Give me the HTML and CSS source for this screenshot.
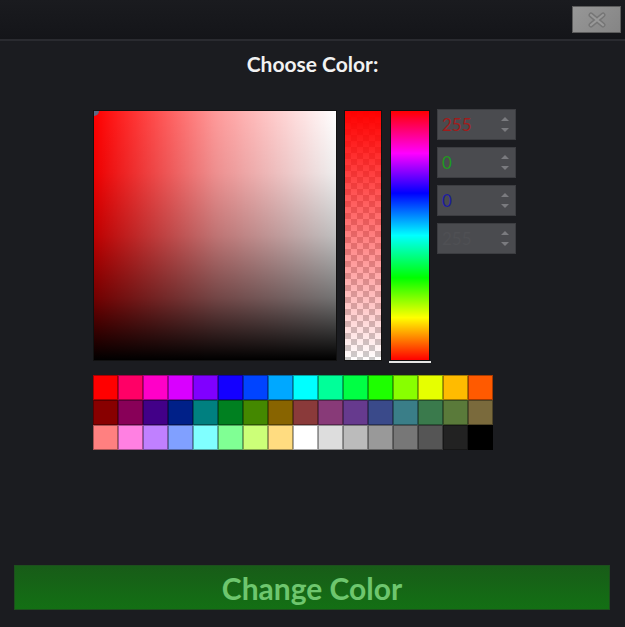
FILE: index.html
```html
<!DOCTYPE html>
<html lang="en">
<head>
    <meta charset="UTF-8">
    <meta name="viewport" content="width=device-width, initial-scale=1.0">
    <title>Choose Color</title>
    <link rel="stylesheet" href="styles.css">
</head>
<body>
    <!-- Window title bar -->
    <div class="titlebar">
        <button class="close-btn" aria-label="Close">
            <svg width="20" height="16" viewBox="0 0 20 16">
                <path d="M4 3 L16 13 M16 3 L4 13" stroke="#767676" stroke-width="5" stroke-linecap="round"/>
                <path d="M4 3 L16 13 M16 3 L4 13" stroke="#999" stroke-width="2.2" stroke-linecap="round"/>
            </svg>
        </button>
    </div>

    <h2 class="heading">Choose Color:</h2>

    <div class="content">
        <div class="picker">
            <div class="sv-box">
                <div class="sv-marker"></div>
            </div>
            <div class="alpha-bar"></div>
            <div class="hue-bar">
                <div class="hue-marker"></div>
            </div>
            <div class="channels">
                <div class="channel">
                    <span class="value red">255</span>
                    <span class="spin"><i class="up"></i><i class="down"></i></span>
                </div>
                <div class="channel">
                    <span class="value green">0</span>
                    <span class="spin"><i class="up"></i><i class="down"></i></span>
                </div>
                <div class="channel">
                    <span class="value blue">0</span>
                    <span class="spin"><i class="up"></i><i class="down"></i></span>
                </div>
                <div class="channel">
                    <span class="value alpha">255</span>
                    <span class="spin"><i class="up"></i><i class="down"></i></span>
                </div>
            </div>
        </div>

        <div class="swatches" id="swatches"></div>
    </div>

    <button class="change-btn">Change Color</button>

    <script>
        // Preset palette, three rows of sixteen
        const palette = [
            '#ff0000', '#ff0066', '#ff00c8', '#d900ff', '#8000ff', '#1400ff', '#0044ff', '#00a8ff',
            '#00ffff', '#00ff99', '#00ff44', '#1eff00', '#88ff00', '#e6ff00', '#ffbb00', '#ff5a00',
            '#880000', '#880058', '#420088', '#002088', '#008080', '#008020', '#448800', '#886400',
            '#8a3a3a', '#883a78', '#663a8e', '#3a4a8a', '#3a7e88', '#3a7a4c', '#5a7a3a', '#7a6a3c',
            '#ff8080', '#ff80e2', '#c080ff', '#80a0ff', '#80ffff', '#80ff94', '#ccff78', '#ffdc80',
            '#ffffff', '#dddddd', '#bbbbbb', '#999999', '#777777', '#555555', '#222222', '#000000'
        ];

        const grid = document.getElementById('swatches');
        palette.forEach(color => {
            const cell = document.createElement('div');
            cell.className = 'swatch';
            cell.style.background = color;
            grid.appendChild(cell);
        });
    </script>
</body>
</html>
```

FILE: styles.css
```css
body {
    margin: 0;
    width: 625px;
    height: 627px;
    background: #1b1c20;
    font-family: Lato, "Open Sans", sans-serif;
    color: #f0f0f0;
    overflow: hidden;
}

/* Title bar */
.titlebar {
    height: 39px;
    background: linear-gradient(#1a1b1f, #141519);
    border-bottom: 2px solid #2a2b30;
    display: flex;
    justify-content: flex-end;
    align-items: flex-start;
}

.close-btn {
    width: 49px;
    height: 27px;
    margin: 6px 4px 0 0;
    padding: 0;
    border: 1px solid #5c5c5c;
    background: linear-gradient(135deg, #979797, #858585);
    display: flex;
    justify-content: center;
    align-items: center;
    cursor: pointer;
}

.heading {
    margin: 11px 0 0;
    text-align: center;
    font-size: 21px;
    line-height: 24px;
    font-weight: bold;
    color: #f2f2f2;
}

.content {
    padding-left: 93px;
    margin-top: 34px;
}

/* Picker row */
.picker {
    display: flex;
    align-items: flex-start;
}

.sv-box {
    position: relative;
    width: 242px;
    height: 249px;
    border: 1px solid #111;
    background:
        linear-gradient(to bottom, rgba(0, 0, 0, 0), rgba(0, 0, 0, 0.07) 25%, rgba(0, 0, 0, 0.25) 50%, rgba(0, 0, 0, 0.55) 75%, #000),
        linear-gradient(to right, rgba(255, 255, 255, 0), rgba(255, 255, 255, 0.6) 50%, #fff),
        #ff0000;
    overflow: hidden;
}

.sv-marker {
    position: absolute;
    left: -5px;
    top: -5px;
    width: 10px;
    height: 10px;
    border-radius: 50%;
    background: #5a6a84;
}

.alpha-bar {
    width: 36px;
    height: 249px;
    margin-left: 7px;
    border: 1px solid #111;
    background:
        linear-gradient(to bottom, #ff0000, rgba(255, 0, 0, 0)),
        conic-gradient(#cccccc 25%, #ffffff 0 50%, #cccccc 0 75%, #ffffff 0) 0 0 / 12px 12px;
}

.hue-bar {
    position: relative;
    width: 38px;
    height: 249px;
    margin-left: 8px;
    border: 1px solid #111;
    background: linear-gradient(to bottom, #f00, #f0f 17%, #00f 33%, #0ff 50%, #0f0 67%, #ff0 83%, #f00);
}

.hue-marker {
    position: absolute;
    left: -2px;
    right: -2px;
    bottom: -3px;
    height: 2px;
    background: #e6e6e6;
}

.channels {
    margin-left: 7px;
    display: flex;
    flex-direction: column;
    gap: 7px;
    margin-top: -1px;
}

.channel {
    width: 79px;
    height: 31px;
    box-sizing: border-box;
    background: #4a4b4f;
    border: 1px solid #3c3d41;
    display: flex;
    align-items: center;
    justify-content: space-between;
    padding: 0 6px 0 4px;
}

.value {
    font-size: 17px;
    font-weight: normal;
}

.value.red { color: #a01c1c; }
.value.green { color: #1f9a1f; }
.value.blue { color: #1c1ca0; }
.value.alpha { color: #4f5054; }

.spin {
    display: flex;
    flex-direction: column;
    gap: 7px;
}

.spin i {
    width: 0;
    height: 0;
    border-left: 4px solid transparent;
    border-right: 4px solid transparent;
}

.spin .up {
    border-bottom: 4px solid #7a7b7f;
}

.spin .down {
    border-top: 4px solid #7a7b7f;
}

/* Preset swatches */
.swatches {
    margin-top: 14px;
    display: grid;
    grid-template-columns: repeat(16, 25px);
    grid-auto-rows: 25px;
    width: 401px;
}

.swatch {
    box-shadow: inset 0 0 0 1px rgba(0, 0, 0, 0.35);
}

/* Bottom action */
.change-btn {
    display: block;
    margin: 115px 0 0 14px;
    width: 596px;
    height: 45px;
    border: 1px solid #1d4f1d;
    background: linear-gradient(#185c18, #137014);
    color: #6ec66e;
    font-family: Lato, "Open Sans", sans-serif;
    font-size: 30px;
    font-weight: bold;
    cursor: pointer;
}
```
